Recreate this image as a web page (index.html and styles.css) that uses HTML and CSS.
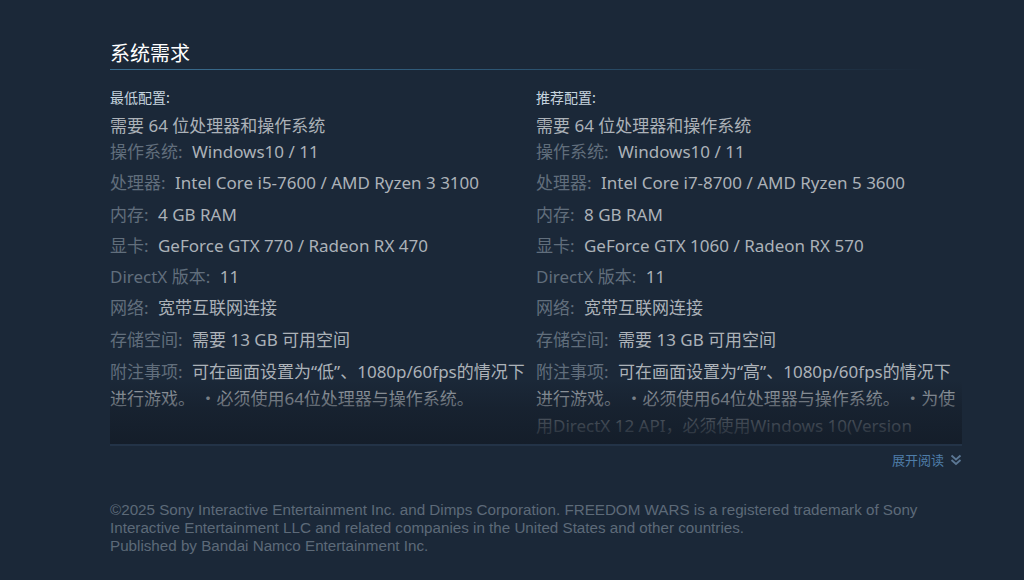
FILE: index.html
```html
<!DOCTYPE html>
<html lang="zh-CN">
<head>
<meta charset="utf-8">
<title>系统需求</title>
<link rel="stylesheet" href="styles.css">
</head>
<body>
<div class="page">
  <section class="sysreq">
    <h2 class="sysreq-title">系统需求</h2>
    <div class="sysreq-body">
      <div class="sysreq-cols">
        <div class="sysreq-col">
          <div class="col-head">最低配置:</div>
          <ul class="req-list">
            <li class="req-first">需要 64 位处理器和操作系统</li>
            <li><strong>操作系统:</strong> Windows10 / 11</li>
            <li><strong>处理器:</strong> Intel Core i5-7600 / AMD Ryzen 3 3100</li>
            <li><strong>内存:</strong> 4 GB RAM</li>
            <li><strong>显卡:</strong> GeForce GTX 770 / Radeon RX 470</li>
            <li><strong>DirectX 版本:</strong> 11</li>
            <li><strong>网络:</strong> 宽带互联网连接</li>
            <li><strong>存储空间:</strong> 需要 13 GB 可用空间</li>
            <li class="req-note"><strong>附注事项:</strong> 可在画面设置为“低”、1080p/60fps的情况下进行游戏。 ・必须使用64位处理器与操作系统。</li>
          </ul>
        </div>
        <div class="sysreq-col">
          <div class="col-head">推荐配置:</div>
          <ul class="req-list">
            <li class="req-first">需要 64 位处理器和操作系统</li>
            <li><strong>操作系统:</strong> Windows10 / 11</li>
            <li><strong>处理器:</strong> Intel Core i7-8700 / AMD Ryzen 5 3600</li>
            <li><strong>内存:</strong> 8 GB RAM</li>
            <li><strong>显卡:</strong> GeForce GTX 1060 / Radeon RX 570</li>
            <li><strong>DirectX 版本:</strong> 11</li>
            <li><strong>网络:</strong> 宽带互联网连接</li>
            <li><strong>存储空间:</strong> 需要 13 GB 可用空间</li>
            <li class="req-note"><strong>附注事项:</strong> 可在画面设置为“高”、1080p/60fps的情况下进行游戏。 ・必须使用64位处理器与操作系统。 ・为使用DirectX 12 API，必须使用Windows 10(Version</li>
          </ul>
        </div>
      </div>
      <div class="fade"></div>
    </div>
    <div class="readmore">
      <a class="readmore-link" href="#"><span class="readmore-text">展开阅读</span>
        <svg class="chev" width="12" height="12" viewBox="0 0 12 12" aria-hidden="true">
          <path d="M1.5 1.5 L6 5.5 L10.5 1.5" fill="none" stroke="currentColor" stroke-width="1.8"/>
          <path d="M1.5 6 L6 10 L10.5 6" fill="none" stroke="currentColor" stroke-width="1.8"/>
        </svg>
      </a>
    </div>
  </section>
  <footer class="legal">
    ©2025 Sony Interactive Entertainment Inc. and Dimps Corporation. FREEDOM WARS is a registered trademark of Sony Interactive Entertainment LLC and related companies in the United States and other countries.<br>
    Published by Bandai Namco Entertainment Inc.
  </footer>
</div>
</body>
</html>
```

FILE: styles.css
```css
html, body {
  margin: 0;
  padding: 0;
  background: #1b2838;
}

body {
  font-family: "Noto Sans", "Noto Sans CJK SC", sans-serif;
  color: #acb2b8;
  height: 580px;
  overflow: hidden;
}

.page {
  width: 852px;
  margin-left: 110px;
}

.sysreq-title {
  margin: 0;
  padding: 40px 0 4px;
  font-size: 20px;
  line-height: 26px;
  font-weight: normal;
  color: #ffffff;
  font-family: "Noto Sans CJK SC", sans-serif;
  background: linear-gradient(to right, #3b6e90 0%, #2d5674 45%, rgba(45, 86, 116, 0) 96%) left bottom / 100% 1px no-repeat;
}

.sysreq-body {
  position: relative;
  height: 374px;
  overflow: hidden;
}

.sysreq-cols {
  display: flex;
  gap: 6px;
}

.sysreq-col {
  width: 420px;
  flex: none;
}

.col-head {
  margin-top: 18px;
  font-size: 14px;
  line-height: 18px;
  color: #c6d4df;
  font-family: "Noto Sans CJK SC", sans-serif;
}

.req-list {
  list-style: none;
  margin: 9px 0 0;
  padding: 0;
  font-size: 17px;
}

.req-list li {
  line-height: 22px;
  margin-bottom: 9.25px;
}

.req-list li.req-first {
  margin-bottom: 4px;
}

.req-list li.req-note {
  line-height: 27px;
  margin-top: -2px;
}

.req-list strong {
  font-weight: normal;
  color: #616e7c;
  margin-right: 5px;
}

.fade {
  position: absolute;
  left: 0;
  right: 0;
  bottom: 0;
  height: 64px;
  background: linear-gradient(to bottom, rgba(20, 29, 41, 0) 0%, rgba(20, 29, 41, 0.55) 45%, rgba(20, 29, 41, 0.95) 100%);
}

.readmore {
  border-top: 2px solid #233347;
  display: flex;
  justify-content: flex-end;
  padding-top: 5px;
}

.readmore-link {
  display: flex;
  align-items: center;
  gap: 6px;
  text-decoration: none;
}

.readmore-text {
  font-size: 13px;
  line-height: 18px;
  color: #4f7ea9;
  font-family: "Noto Sans CJK SC", sans-serif;
}

.chev {
  color: #5b7794;
}

.legal {
  margin-top: 32px;
  font-family: "Liberation Sans", Arial, sans-serif;
  font-size: 15.2px;
  line-height: 18px;
  color: #5d6a78;
}
```
